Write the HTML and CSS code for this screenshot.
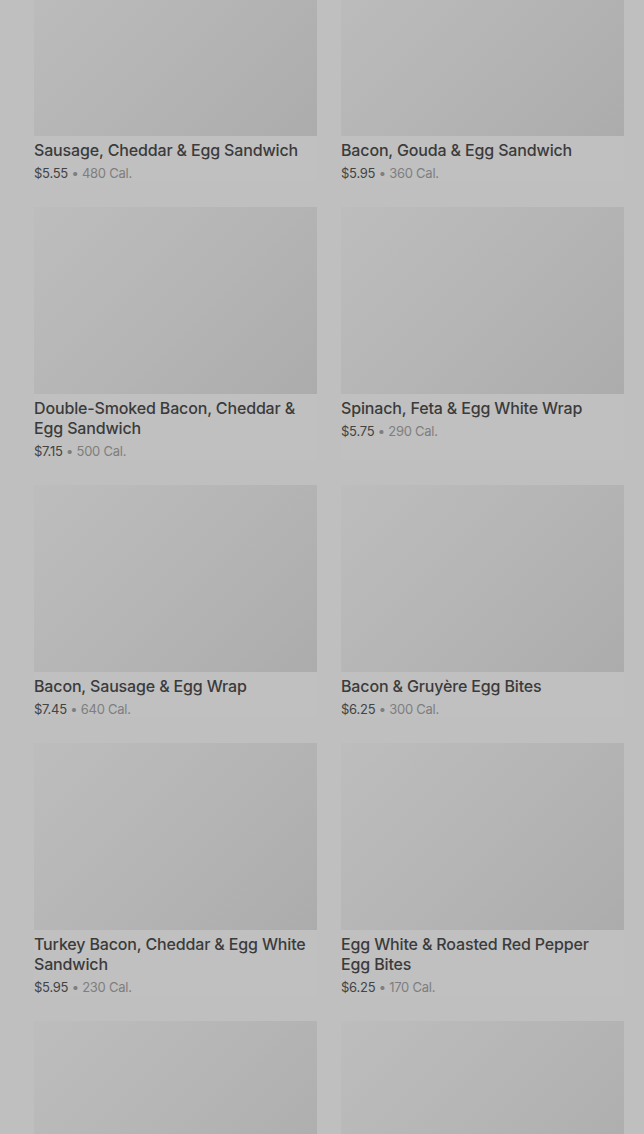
FILE: index.html
```html
<!DOCTYPE html>
<html lang="en">
<head>
<meta charset="utf-8">
<title>Menu</title>
<link rel="stylesheet" href="styles.css">
</head>
<body>
<main class="menu">
  <div class="grid">
    <article class="card">
      <div class="thumb"></div>
      <h3 class="name">Sausage, Cheddar &amp; Egg Sandwich</h3>
      <p class="meta"><span class="price">$5.55</span> <span class="cal">• 480 Cal.</span></p>
    </article>
    <article class="card">
      <div class="thumb"></div>
      <h3 class="name">Bacon, Gouda &amp; Egg Sandwich</h3>
      <p class="meta"><span class="price">$5.95</span> <span class="cal">• 360 Cal.</span></p>
    </article>
    <article class="card">
      <div class="thumb"></div>
      <h3 class="name">Double-Smoked Bacon, Cheddar &amp; Egg Sandwich</h3>
      <p class="meta"><span class="price">$7.15</span> <span class="cal">• 500 Cal.</span></p>
    </article>
    <article class="card">
      <div class="thumb"></div>
      <h3 class="name">Spinach, Feta &amp; Egg White Wrap</h3>
      <p class="meta"><span class="price">$5.75</span> <span class="cal">• 290 Cal.</span></p>
    </article>
    <article class="card">
      <div class="thumb"></div>
      <h3 class="name">Bacon, Sausage &amp; Egg Wrap</h3>
      <p class="meta"><span class="price">$7.45</span> <span class="cal">• 640 Cal.</span></p>
    </article>
    <article class="card">
      <div class="thumb"></div>
      <h3 class="name">Bacon &amp; Gruyère Egg Bites</h3>
      <p class="meta"><span class="price">$6.25</span> <span class="cal">• 300 Cal.</span></p>
    </article>
    <article class="card">
      <div class="thumb"></div>
      <h3 class="name">Turkey Bacon, Cheddar &amp; Egg White Sandwich</h3>
      <p class="meta"><span class="price">$5.95</span> <span class="cal">• 230 Cal.</span></p>
    </article>
    <article class="card">
      <div class="thumb"></div>
      <h3 class="name">Egg White &amp; Roasted Red Pepper Egg Bites</h3>
      <p class="meta"><span class="price">$6.25</span> <span class="cal">• 170 Cal.</span></p>
    </article>
    <article class="card">
      <div class="thumb"></div>
    </article>
    <article class="card">
      <div class="thumb"></div>
    </article>
  </div>
</main>
</body>
</html>
```

FILE: styles.css
```css
html, body {
  margin: 0;
  padding: 0;
  background: #bfbfbf;
  overflow: hidden;
}

body {
  height: 1134px;
  font-family: Inter, "Noto Sans", Roboto, sans-serif;
}

.menu {
  padding: 0 20px 0 34px;
}

.grid {
  margin-top: -51px;
  display: grid;
  grid-template-columns: 283px 283px;
  column-gap: 24px;
  row-gap: 26px;
}

.card {
  background: #c0c0c0;
  margin: 0;
}

.thumb {
  height: 187px;
  background: linear-gradient(135deg, #bdbdbd 0%, #b5b5b5 50%, #acacac 100%);
}

.name {
  margin: 4px 0 0;
  max-width: 276px;
  font-size: 16px;
  line-height: 20px;
  font-weight: 500;
  color: #3b3b3b;
  letter-spacing: -0.15px;
}

.meta {
  margin: 5px 0 0;
  font-size: 13px;
  line-height: 16px;
  letter-spacing: -0.25px;
}

.price {
  color: #434343;
}

.cal {
  color: #7e7e7e;
}
```
